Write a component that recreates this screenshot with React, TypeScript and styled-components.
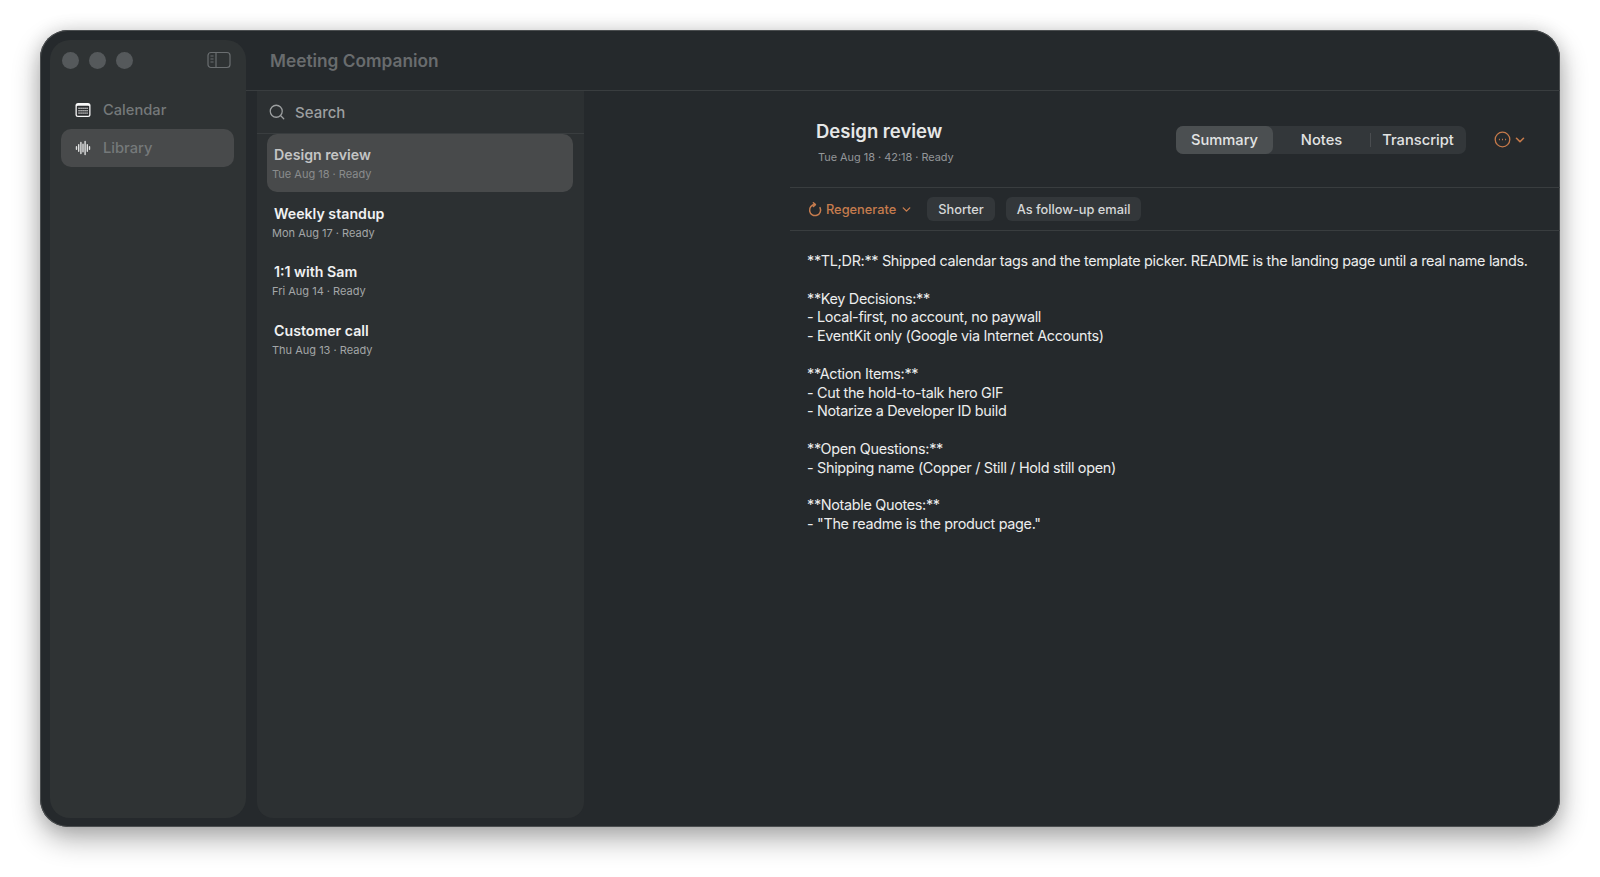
import React from "react";
import styled, {createGlobalStyle} from "styled-components";
import {ChevronDown, Search} from "lucide-react";

const GlobalStyle = createGlobalStyle`
  html, body {
    margin: 0;
    height: 100%;
    background: #fff;
  }
  body {
    font-family: Inter, "Liberation Sans", sans-serif;
    -webkit-font-smoothing: antialiased;
  }
`;

const Page = styled.div`
  width: 1600px;
  height: 877px;
  padding: 30px 40px 50px;
  box-sizing: border-box;
  overflow: hidden;
`;

const Window = styled.div`
  height: 797px;
  display: flex;
  background: #25292c;
  border-radius: 28px;
  box-shadow: inset 0 0 0 1px #4b4e50, 0 12px 28px rgba(0, 0, 0, .32), 0 0 18px rgba(0, 0, 0, .12);
  overflow: hidden;
`;

const Sidebar = styled.aside`
  width: 196px;
  margin: 10px 0 9px 10px;
  padding: 0 12px 0 11px;
  box-sizing: border-box;
  flex-shrink: 0;
  background: #2f3334;
  border-radius: 20px;
`;

const Controls = styled.div`
  height: 40px;
  display: flex;
  align-items: center;
  margin-bottom: 11px;
  padding-left: 1px;
`;

const Light = styled.span`
  width: 17px;
  height: 17px;
  border-radius: 50%;
  background: #55595b;
  margin-right: 10px;
`;

const ToggleIcon = styled.svg`
  margin-left: auto;
  margin-right: 3px;
`;

const NavItem = styled.div<{$active?: boolean}>`
  height: 38px;
  display: flex;
  align-items: center;
  gap: 12px;
  padding-left: 14px;
  border-radius: 10px;
  background: ${p => p.$active ? "#484a4b" : "transparent"};
  color: #75797a;
  font-size: 14.7px;
  font-weight: 500;
`;

const Main = styled.div`
  flex: 1;
  min-width: 0;
  display: flex;
  flex-direction: column;
`;

const TitleBar = styled.header`
  height: 61px;
  flex-shrink: 0;
  display: flex;
  align-items: center;
  padding-left: 24px;
  border-bottom: 1px solid #393d3f;
  box-sizing: border-box;
  color: #696c6e;
  font-size: 17.3px;
  font-weight: 600;
`;

const Body = styled.div`
  flex: 1;
  min-height: 0;
  display: flex;
`;

const ListPanel = styled.section`
  width: 327px;
  margin: 0 0 9px 11px;
  flex-shrink: 0;
  background: #2c3032;
  border-radius: 0 0 16px 16px;
`;

const SearchRow = styled.div`
  height: 42px;
  display: flex;
  align-items: center;
  gap: 9px;
  padding-left: 11px;
  border-bottom: 1px solid #393d3f;
  color: #9c9fa0;
  font-size: 15px;
  font-weight: 500;
`;

const Meetings = styled.div`
  padding: 0 11px 0 10px;
  display: flex;
  flex-direction: column;
  gap: 1px;
`;

const Meeting = styled.div<{$active?: boolean}>`
  height: 57.5px;
  padding: 12px 0 0 7px;
  box-sizing: border-box;
  border-radius: 10px;
  background: ${p => p.$active ? "#484a4b" : "transparent"};
`;

const MeetingTitle = styled.div<{$active?: boolean}>`
  color: ${p => p.$active ? "#c4c5c5" : "#f0f1f1"};
  font-size: 14.2px;
  line-height: 17px;
  font-weight: 600;
`;

const MeetingMeta = styled.div<{$active?: boolean}>`
  margin: 4px 0 0 -2px;
  color: ${p => p.$active ? "#8a8c8d" : "#a3a6a7"};
  font-size: 11px;
  line-height: 14px;
`;

const Detail = styled.main`
  flex: 1;
  min-width: 0;
  padding-left: 206px;
  display: flex;
  flex-direction: column;
`;

const DetailHeader = styled.div`
  height: 97px;
  flex-shrink: 0;
  display: flex;
  justify-content: space-between;
  box-sizing: border-box;
  padding: 28px 33px 0 26px;
  border-bottom: 1px solid #393d3f;
`;

const DetailTitle = styled.h1`
  margin: 0;
  color: #e6e7e7;
  font-size: 18.5px;
  line-height: 24px;
  font-weight: 600;
`;

const DetailMeta = styled.div`
  margin: 7px 0 0 2px;
  color: #94979a;
  font-size: 10.9px;
  line-height: 14px;
`;

const HeaderActions = styled.div`
  display: flex;
  align-items: flex-start;
  gap: 28px;
  margin-top: 7px;
`;

const Tabs = styled.div`
  width: 290px;
  height: 28px;
  display: flex;
  border-radius: 7px;
  background: #33373a;
`;

const Tab = styled.div<{$active?: boolean; $w: number; $divided?: boolean}>`
  position: relative;
  width: ${p => p.$w}px;
  display: flex;
  align-items: center;
  justify-content: center;
  border-radius: 7px;
  background: ${p => p.$active ? "#4b4f51" : "transparent"};
  color: #e2e3e3;
  font-size: 14.7px;
  font-weight: 500;
  ${p => p.$divided && `
    &::before {
      content: "";
      position: absolute;
      left: 0;
      top: 7px;
      bottom: 7px;
      width: 1px;
      background: #4a4d50;
    }
  `}
`;

const More = styled.div`
  height: 27px;
  display: flex;
  align-items: center;
  gap: 2px;
  color: #c4794a;
`;

const Toolbar = styled.div`
  height: 43px;
  flex-shrink: 0;
  display: flex;
  align-items: center;
  box-sizing: border-box;
  padding-left: 18px;
  border-bottom: 1px solid #393d3f;
`;

const Regenerate = styled.div`
  display: flex;
  align-items: center;
  gap: 4px;
  margin-right: 14px;
  color: #c67c4e;
  font-size: 12.8px;
  font-weight: 500;
`;

const Chip = styled.div`
  height: 24px;
  display: flex;
  align-items: center;
  padding: 0 11px;
  margin-right: 11px;
  border-radius: 6px;
  background: #33373a;
  color: #d6d7d8;
  font-size: 12.8px;
  font-weight: 500;
`;

const Summary = styled.div`
  padding: 21px 0 0 17px;
  color: #eceded;
  font-size: 14.4px;
  line-height: 18.8px;
  letter-spacing: -.32px;
  white-space: pre;
`;

const summary = `**TL;DR:** Shipped calendar tags and the template picker. README is the landing page until a real name lands.

**Key Decisions:**
- Local-first, no account, no paywall
- EventKit only (Google via Internet Accounts)

**Action Items:**
- Cut the hold-to-talk hero GIF
- Notarize a Developer ID build

**Open Questions:**
- Shipping name (Copper / Still / Hold still open)

**Notable Quotes:**
- "The readme is the product page."`;

const meetings = [
  {title: "Design review", meta: "Tue Aug 18 · Ready", active: true},
  {title: "Weekly standup", meta: "Mon Aug 17 · Ready"},
  {title: "1:1 with Sam", meta: "Fri Aug 14 · Ready"},
  {title: "Customer call", meta: "Thu Aug 13 · Ready"},
];

const CalendarIcon = () => (
  <svg width="16" height="16" viewBox="0 0 16 16">
    <rect x="0.5" y="1" width="15" height="14" rx="2.5" fill="#f8f8f8" />
    <rect x="1.8" y="3.8" width="12.4" height="9.9" rx="1" fill="#2a2c2e" />
    {[0, 1, 2].map(row => [0, 1, 2, 3, 4].map(col => (
      <rect key={`${row}-${col}`} x={3.4 + col * 2} y={5.6 + row * 2.4} width="1.3" height="1.4" fill="#d8d8d8" />
    )))}
  </svg>
);

const WaveIcon = () => (
  <svg width="16" height="16" viewBox="0 0 16 16" stroke="#dfe0e0" strokeWidth="1.4" strokeLinecap="round">
    <path d="M1.5 6.8v2.4M3.7 4.8v6.4M5.9 2.5v11M8 4.2v7.6M10.1 1.5v13M12.3 4.8v6.4M14.5 6.8v2.4" />
  </svg>
);

// arrow.clockwise style: open at the upper right, head sitting on top
const RegenIcon = () => (
  <svg width="14" height="15" viewBox="0 0 14 15" fill="none" stroke="currentColor" strokeWidth="1.5" strokeLinecap="round" strokeLinejoin="round">
    <path d="M7 2.6A5.5 5.5 0 1 0 12 5.6" />
    <path d="M5.4 .8L7.4 2.6 5.4 4.4" />
  </svg>
);

const App = () => (
  <Page>
    <GlobalStyle />
    <Window>
      <Sidebar>
        <Controls>
          <Light />
          <Light />
          <Light />
          <ToggleIcon width="24" height="18" viewBox="0 0 24 18" fill="none" stroke="#6b6f71" strokeWidth="1.2">
            <rect x="1" y="1.5" width="22" height="15" rx="3" />
            <path d="M9 1.5v15M3.5 5h3M3.5 8h3M3.5 11h3" />
          </ToggleIcon>
        </Controls>
        <NavItem>
          <CalendarIcon />
          Calendar
        </NavItem>
        <NavItem $active>
          <WaveIcon />
          Library
        </NavItem>
      </Sidebar>
      <Main>
        <TitleBar>Meeting Companion</TitleBar>
        <Body>
          <ListPanel>
            <SearchRow>
              <Search size={18} color="#9c9fa0" strokeWidth={1.7} />
              Search
            </SearchRow>
            <Meetings>
              {meetings.map(m => (
                <Meeting key={m.title} $active={m.active}>
                  <MeetingTitle $active={m.active}>{m.title}</MeetingTitle>
                  <MeetingMeta $active={m.active}>{m.meta}</MeetingMeta>
                </Meeting>
              ))}
            </Meetings>
          </ListPanel>
          <Detail>
            <DetailHeader>
              <div>
                <DetailTitle>Design review</DetailTitle>
                <DetailMeta>Tue Aug 18 · 42:18 · Ready</DetailMeta>
              </div>
              <HeaderActions>
                <Tabs>
                  <Tab $active $w={97}>Summary</Tab>
                  <Tab $w={97}>Notes</Tab>
                  <Tab $w={96} $divided>Transcript</Tab>
                </Tabs>
                <More>
                  <svg width="17" height="17" viewBox="0 0 17 17" fill="none" stroke="currentColor" strokeWidth="1.3">
                    <circle cx="8.5" cy="8.5" r="7.3" />
                    <path d="M4.9 8.5h1M8 8.5h1M11.1 8.5h1" strokeWidth="1.5" />
                  </svg>
                  <ChevronDown size={14} strokeWidth={2.8} />
                </More>
              </HeaderActions>
            </DetailHeader>
            <Toolbar>
              <Regenerate>
                <RegenIcon />
                Regenerate
                <ChevronDown size={13} strokeWidth={2.6} />
              </Regenerate>
              <Chip>Shorter</Chip>
              <Chip>As follow-up email</Chip>
            </Toolbar>
            <Summary>{summary}</Summary>
          </Detail>
        </Body>
      </Main>
    </Window>
  </Page>
);

export default App;
